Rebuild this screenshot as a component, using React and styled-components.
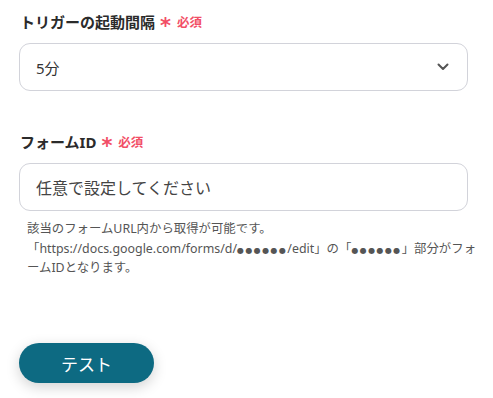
import React from "react";
import styled, { createGlobalStyle } from "styled-components";

const Global = createGlobalStyle`
  html, body { margin: 0; padding: 0; background: #fff; }
  body { font-family: "Noto Sans", "Noto Sans CJK JP", sans-serif; }
`;

const Page = styled.div`
  width: 493px;
  height: 398px;
  box-sizing: border-box;
  padding: 10px 25px 0 19px;
  display: flex;
  flex-direction: column;
`;

const Field = styled.div`
  display: flex;
  flex-direction: column;
  margin-bottom: ${(p) => p.$mb || 0}px;
`;

const Label = styled.div`
  display: flex;
  align-items: center;
  height: 22px;
  margin-bottom: 11px;
  padding-left: 1px;
  font-size: 15px;
  font-weight: 700;
  color: #2b2b2b;
`;

const Required = styled.span`
  display: inline-flex;
  align-items: center;
  margin-left: 5px;
  color: #f24e66;
  font-size: 12.5px;
  font-weight: 700;
  gap: 6px;
`;

const Star = styled.span`
  font-family: "DejaVu Sans", sans-serif;
  font-size: 21px;
  line-height: 1;
  position: relative;
  top: 5px;
`;

const Box = styled.div`
  box-sizing: border-box;
  height: 48px;
  border: 1px solid #d2d3da;
  border-radius: 11px;
  display: flex;
  align-items: center;
  justify-content: space-between;
  padding: 0 18px 0 16px;
  font-size: ${(p) => p.$fs || 15}px;
  color: ${(p) => p.$color || "#333"};
`;

const Help = styled.div`
  margin-top: 8px;
  margin-right: -12px;
  padding-left: 8px;
  font-size: 12.4px;
  line-height: 19.5px;
  color: #555;
`;

const Dots = styled.span`
  font-family: "DejaVu Sans", sans-serif;
  font-size: 8px;
  line-height: 1;
  letter-spacing: 1.4px;
`;

const Button = styled.button`
  margin-top: auto;
  margin-bottom: 15px;
  width: 135px;
  height: 40px;
  border: none;
  border-radius: 20px;
  background: #0d6a82;
  color: #fff;
  font-family: inherit;
  font-size: 17px;
  box-shadow: 0 4px 14px rgba(0, 0, 0, 0.18);
`;

const Chevron = () => (
  <svg width="12" height="8" viewBox="0 0 12 8">
    <path d="M1.5 1.5 L6 6 L10.5 1.5" fill="none" stroke="#555" strokeWidth="2" strokeLinecap="round" strokeLinejoin="round" />
  </svg>
);

const Req = () => (
  <Required>
    <Star>*</Star>必須
  </Required>
);

export default function App() {
  return (
    <>
      <Global />
      <Page>
        <Field $mb={39}>
          <Label>
            トリガーの起動間隔
            <Req />
          </Label>
          <Box>
            <span>5分</span>
            <Chevron />
          </Box>
        </Field>
        <Field>
          <Label>
            フォームID
            <Req />
          </Label>
          <Box $fs={16} $color="#444">任意で設定してください</Box>
          <Help>
            該当のフォームURL内から取得が可能です。
            <br />
            「https://docs.google.com/forms/d/<Dots>●●●●●●</Dots>/edit」の「<Dots>●●●●●●</Dots>」部分がフォ
            <br />
            ームIDとなります。
          </Help>
        </Field>
        <Button>テスト</Button>
      </Page>
    </>
  );
}
